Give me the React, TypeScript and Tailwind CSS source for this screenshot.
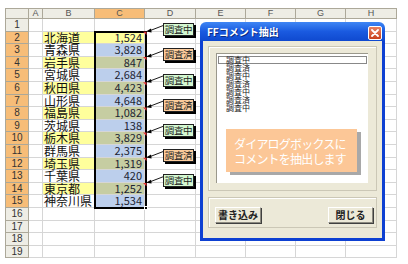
import React from "react";

const JP = "font-['Noto_Sans_CJK_JP','Noto_Sans_CJK_SC',sans-serif]";

const prefs = [
  ["北海道", "1,524"],
  ["青森県", "3,828"],
  ["岩手県", "847"],
  ["宮城県", "2,684"],
  ["秋田県", "4,423"],
  ["山形県", "4,648"],
  ["福島県", "1,082"],
  ["茨城県", "138"],
  ["栃木県", "3,829"],
  ["群馬県", "2,375"],
  ["埼玉県", "1,319"],
  ["千葉県", "420"],
  ["東京都", "1,252"],
  ["神奈川県", "1,534"],
];

const cols = [
  { key: "A", w: "w-[14px]" },
  { key: "B", w: "w-[52px]" },
  { key: "C", w: "w-[50px]" },
  { key: "D", w: "w-[51px]" },
  { key: "E", w: "w-[50px]" },
  { key: "F", w: "w-[50px]" },
  { key: "G", w: "w-[50px]" },
  { key: "H", w: "w-[51px]" },
];

const ROW_H = 12.6;
const rowTop = (r: number) => 19 + (r - 1) * ROW_H;

// コメントは C2, C4 ... C14
const comments = [2, 4, 6, 8, 10, 12, 14].map((r, i) => ({
  row: r,
  text: i % 2 == 0 ? "調査中" : "調査済",
  done: i % 2 == 1,
}));

const HeaderRow = () => (
  <div className="flex h-[11px]">
    <div className="w-[24px] shrink-0 border border-[#aca899] bg-[#eeede5]" />
    {cols.map((c) => (
      <div
        key={c.key}
        className={`${c.w} shrink-0 border-y border-r border-[#aca899] text-center font-['Liberation_Sans',sans-serif] text-[9px] leading-[9px] text-[#555] ${
          c.key == "C" ? "bg-[#f7bd78]" : "bg-[#eeede5]"
        }`}
      >
        {c.key}
      </div>
    ))}
  </div>
);

const Row = ({ r }: { r: number }) => {
  const data = r >= 2 && r <= 15 ? prefs[r - 2] : null;
  const even = r % 2 == 0;
  const bBg = data && even ? "bg-[#ffff9c]" : "bg-white";
  let cBg = "bg-white";
  if (data) {
    if (r == 2) cBg = "bg-[#ffff9c]";
    else cBg = even ? "bg-[#c6cda2]" : "bg-[#bccfec]";
  }
  return (
    <div className="flex h-[12.6px]">
      <div
        className={`w-[24px] shrink-0 border-x border-b border-[#aca899] text-center font-['Liberation_Sans',sans-serif] text-[10px] leading-[11px] text-[#333] ${
          data ? "bg-[#f7bd78]" : "bg-[#eeede5]"
        }`}
      >
        {r}
      </div>
      {cols.map((c) => {
        let bg = "bg-white";
        if (c.key == "B") bg = bBg;
        if (c.key == "C") bg = cBg;
        return (
          <div
            key={c.key}
            className={`${c.w} ${bg} shrink-0 whitespace-nowrap border-r border-b border-[#d6d6d6] ${JP} text-[11px] leading-[11px] text-[#111]`}
          >
            {data && c.key == "B" && <span className="pl-[1px] text-[12px] leading-[11px]">{data[0]}</span>}
            {data && c.key == "C" && (
              <div className="pr-[2px] text-right text-[#1c2433]">{data[1]}</div>
            )}
          </div>
        );
      })}
    </div>
  );
};

const Arrows = () => (
  <svg className="pointer-events-none absolute left-0 top-0" width="408" height="264">
    {comments.map((c) => {
      const ay = rowTop(c.row);
      const by = ay - 6;
      return (
        <g key={c.row}>
          <line x1="163" y1={by} x2="149" y2={ay - 0.6} stroke="#000" strokeWidth="0.9" />
          <polygon
            points={`146,${ay} 151,${ay - 3} 151.6,${ay + 0.8}`}
            fill="#000"
          />
          <polygon points={`143,${ay + 0.2} 146.5,${ay + 0.2} 146.5,${ay + 3.5}`} fill="#d33" />
        </g>
      );
    })}
  </svg>
);

const CommentBoxes = () => (
  <>
    {comments.map((c) => (
      <div
        key={c.row}
        className={`absolute left-[163px] flex h-[13px] w-[31px] items-center justify-center whitespace-nowrap border border-[#222] shadow-[2px_2px_0_#000] ${JP} text-[9.5px] leading-[11px] tracking-[-0.3px] text-[#222] ${
          c.done ? "bg-[#fccc9c]" : "bg-[#d4f8d0]"
        }`}
        style={{ top: rowTop(c.row) - 8.5 }}
      >
        {c.text}
      </div>
    ))}
  </>
);

const XpButton = ({ label, w }: { label: string; w: string }) => (
  <button
    type="button"
    className={`${w} h-[16px] border border-t-white border-l-white border-r-[#8c8a80] border-b-[#8c8a80] bg-[#ece9d8] shadow-[1px_1px_0_#404040] ${JP} text-[10px] font-bold leading-[14px] text-[#222]`}
  >
    {label}
  </button>
);

const Dialog = () => {
  const items = ["調査中", "調査済", "調査中", "調査済", "調査中", "調査済", "調査中"];
  return (
    <div className="absolute left-[200px] top-[22px] flex h-[219px] w-[185px] flex-col">
      <div className="relative flex h-[19px] shrink-0 items-center rounded-t-[6px] bg-linear-to-b from-[#3f86f4] via-[#1a5ae0] to-[#0f49cf] pl-[7px]">
        <span className={`${JP} text-[10px] font-bold leading-[12px] text-white [text-shadow:1px_1px_0_#0a2a80]`}>
          FFコメント抽出
        </span>
        <div className="absolute right-[3px] top-[4px] flex h-[14px] w-[14px] items-center justify-center rounded-[2px] border border-white bg-linear-to-b from-[#e9805f] to-[#c8401c]">
          <svg width="8" height="8" viewBox="0 0 8 8">
            <path d="M1 1 L7 7 M7 1 L1 7" stroke="#fff" strokeWidth="1.8" strokeLinecap="round" />
          </svg>
        </div>
      </div>
      <div className="flex flex-1 flex-col border-x-[3px] border-b-[3px] border-[#0e40d2] bg-[#ece9d8] px-[5px] pt-[5px]">
        <div className="h-[145px] border border-[#cbc7b6] shadow-[inset_1px_1px_0_#fff]">
          <div className="ml-[7px] mt-[6px] h-[130px] w-[152px] border-l border-t border-[#9a988c] bg-white pt-[2px]">
            {items.map((t, i) => (
              <div
                key={i}
                className={`mx-[1px] flex h-[8px] items-center whitespace-nowrap pl-[7px] ${JP} text-[8px] leading-[8px] text-[#222] ${
                  i == 0 ? "border border-[#888]" : "border border-transparent"
                }`}
              >
                {t}
              </div>
            ))}
          </div>
        </div>
        <div className="mt-[6px] flex h-[31px] items-start justify-between border border-[#cbc7b6] pl-[6px] pr-[3px] pt-[9px] shadow-[inset_1px_1px_0_#fff]">
          <XpButton label="書き込み" w="w-[46px]" />
          <XpButton label="閉じる" w="w-[45px]" />
        </div>
      </div>
    </div>
  );
};

const App = () => {
  return (
    <div className="relative h-[264px] w-[408px] overflow-hidden bg-white">
      <div className="pl-[5px] pt-[8px]">
        <HeaderRow />
        {Array.from({ length: 19 }, (_, i) => (
          <Row key={i} r={i + 1} />
        ))}
      </div>

      {/* 選択範囲 C2:C15 */}
      <div className="absolute left-[94px] top-[30.6px] h-[178.6px] w-[53px] border-2 border-black" />
      <div className="absolute left-[144px] top-[206px] h-[4px] w-[4px] border border-white bg-black" />

      <Arrows />
      <CommentBoxes />
      <Dialog />

      <div className="absolute left-[226px] top-[129px] h-[43px] w-[131px] bg-[#fcc797] pl-[8px] pt-[7px] shadow-[4px_3px_0_#a8a8a8]">
        <div className={`${JP} whitespace-nowrap text-[12px] leading-[15px] tracking-[-0.8px] text-white`}>ダイアログボックスに</div>
        <div className={`${JP} whitespace-nowrap text-[12px] leading-[15px] tracking-[-0.8px] text-white`}>コメントを抽出します</div>
      </div>
    </div>
  );
};

export default App;
